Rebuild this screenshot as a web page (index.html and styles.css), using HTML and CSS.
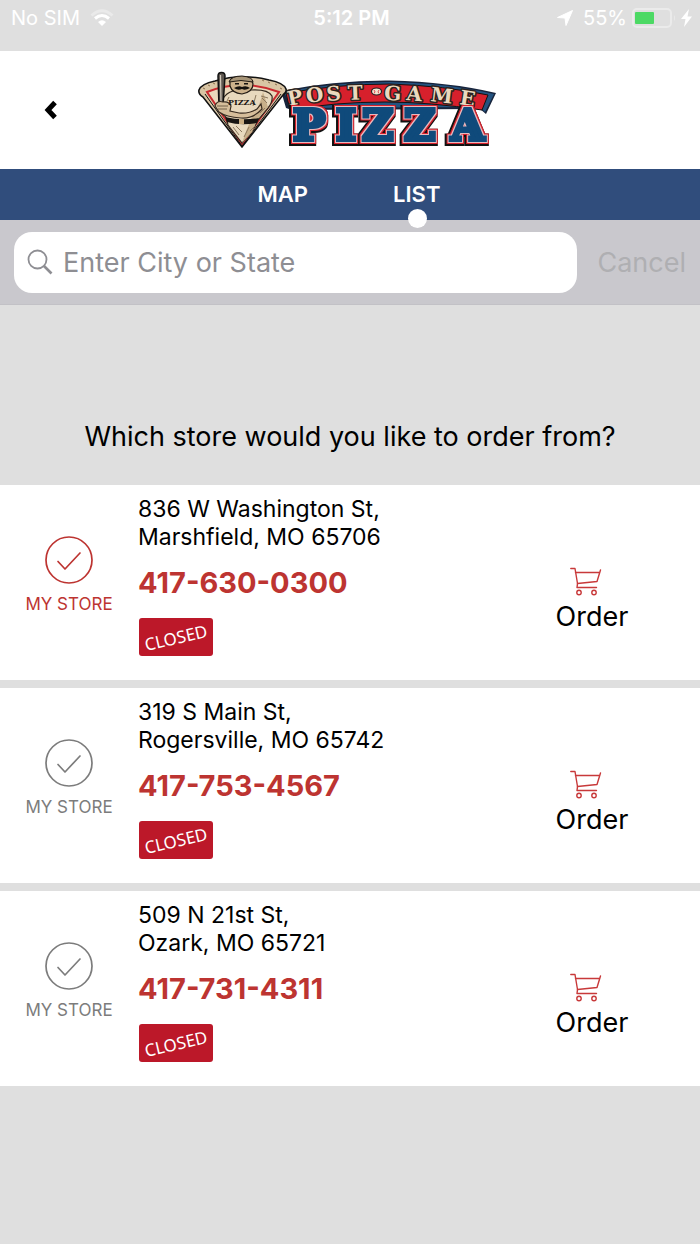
FILE: index.html
```
<!DOCTYPE html>
<html lang="en">
<head>
    <meta charset="UTF-8">
    <meta name="viewport" content="width=device-width, initial-scale=1.0">
    <title>Post-Game Pizza</title>
    <link rel="stylesheet" href="styles.css">
</head>
<body>
    <!-- shared icons -->
    <svg class="sprite" aria-hidden="true">
        <symbol id="check" viewBox="0 0 48 48">
            <g fill="none" stroke="currentColor" stroke-width="1.700" stroke-linecap="round" stroke-linejoin="round">
                <circle cx="24" cy="24" r="23"/>
                <path d="M13 25.500 L20 33 L35 17"/>
            </g>
        </symbol>
        <symbol id="cart" viewBox="0 0 44 30">
            <g fill="none" stroke="currentColor" stroke-width="1.400" stroke-linecap="round" stroke-linejoin="round">
                <path d="M.8 1.500 H5 L7.500 16.500 L7 20.500 H26.500"/>
                <path d="M5.500 5.500 H29.500 M30.500 3 L27 14.500 L7.500 16.500"/>
                <circle cx="9" cy="25.500" r="2.200"/>
                <circle cx="24" cy="25.500" r="2.200"/>
            </g>
        </symbol>
    </svg>

    <div class="status-bar">
        <div class="status-left">
            <span>No SIM</span>
            <svg width="24" height="18" viewBox="0 0 24 18">
                <g fill="none" stroke="#fff">
                    <path d="M1.500 6.500 Q12 -3 22.500 6.500" stroke-width="3" opacity=".35"/>
                    <path d="M5 9.500 Q12 3.500 19 9.500" stroke-width="3"/>
                </g>
                <path d="M12 17 L8 13 Q12 9.500 16 13 Z" fill="#fff"/>
            </svg>
        </div>
        <span class="clock">5:12 PM</span>
        <div class="status-right">
            <svg class="arrow" width="16" height="16" viewBox="0 0 16 16"><path d="M15.500 .5 L9 15.500 L8 8 L.5 7.500 Z" fill="#fff" stroke="#fff" stroke-linejoin="round"/></svg>
            <span>55%</span>
            <svg width="44" height="20" viewBox="0 0 44 20">
                <rect x="1" y="1" width="38" height="18" rx="4" fill="none" stroke="#ebebeb" stroke-width="2"/>
                <rect x="3" y="4" width="19" height="12" rx="1" fill="#4cd964"/>
                <path d="M42 7 Q44 10 42 13 Z" fill="#ebebeb"/>
            </svg>
            <svg width="11" height="18" viewBox="0 0 11 18"><path d="M8 0 L0 10 H4.500 L3 18 L11 7.500 H6.500 Z" fill="#fff"/></svg>
        </div>
    </div>

    <header class="header">
        <button class="back" aria-label="Back">
            <svg width="14" height="20" viewBox="0 0 14 20"><path d="M11 2.500 L4 10 L11 17.500" fill="none" stroke="#000" stroke-width="5"/></svg>
        </button>
        <svg class="logo" width="320" height="90" viewBox="190 65 320 90" role="img" aria-label="Post-Game Pizza">
            <!-- white, red and black edges round the big word -->
            <filter id="edges" x="-10%" y="-20%" width="120%" height="150%" color-interpolation-filters="sRGB">
                <feMorphology in="SourceAlpha" operator="dilate" radius="1" result="a"/>
                <feMorphology in="SourceAlpha" operator="dilate" radius="2" result="b"/>
                <feMorphology in="SourceAlpha" operator="dilate" radius="3" result="c"/>
                <feOffset in="c" dx="-1" dy="1" result="d"/>
                <feFlood flood-color="#e9b9bd"/>
                <feComposite in2="a" operator="in" result="white"/>
                <feFlood flood-color="#d7202c"/>
                <feComposite in2="b" operator="in" result="red"/>
                <feFlood flood-color="#111"/>
                <feComposite in2="d" operator="in" result="black"/>
                <feMerge>
                    <feMergeNode in="black"/>
                    <feMergeNode in="red"/>
                    <feMergeNode in="white"/>
                    <feMergeNode in="SourceGraphic"/>
                </feMerge>
            </filter>
            <!-- banner -->
            <path d="M281 91 Q335 80 390 80.500 Q450 82 496 93 L486 114 L480 109 L292 110 L286 108 Z" fill="#17243c"/>
            <path d="M284 92 Q336 82 390 82 Q448 83 494 94 L485 112 L480 107 L292 108 Z" fill="#235380"/>
            <path d="M286 93 Q340 84 390 84 Q446 86 488 95 L482 110 Q430 102 385 102 Q335 102 290 110 Z" fill="#d7202c" stroke="#111" stroke-width="1"/>
            <g class="logo-post">
                <text x="289 307 327 348" y="106 103 101 100" rotate="-12 -8 -5 -2">POST</text>
                <text x="384 406 430 459" y="100 100 101 104" rotate="2 5 7 9">GAME</text>
            </g>
            <ellipse cx="376.500" cy="91.500" rx="5" ry="3.500" fill="#f2e4cf" stroke="#222" stroke-width="1.200"/>
            <path d="M374 90 Q376 92 374 93.500 M379 90 Q377 92 379 93.500" fill="none" stroke="#d7202c" stroke-width=".8"/>
            <!-- word -->
            <g filter="url(#edges)">
                <text class="logo-pizza" x="293 336 362 404 451" y="140">PIZZA</text>
            </g>
            <!-- slice -->
            <path d="M199 90 Q201 84 215 81 Q241 73 269 80 Q284 83 286 89 Q287 92 283 95 L242 147 L203 97 Q198 94 199 90 Z" fill="#d9c5a4" stroke="#111" stroke-width="1.600"/>
            <path d="M207 92 Q242 78 279 92 L242 144 Z" fill="#ead9bc" stroke="#c92a30" stroke-width="2"/>
            <path d="M205 94 L242 146 L281 94" fill="none" stroke="#111" stroke-width="1"/>
            <path d="M203 88 l2 1 M208 85 l2 1 M213 83 l2 1 M262 80 l2 1 M268 82 l2 1 M275 84 l2 1 M280 88 l2 1" stroke="#8a6f4e" stroke-width="1"/>
            <!-- batter -->
            <path d="M223 99 Q226 93 233 91 L251 90 Q268 89 272 96 Q273 102 268 108 L258 120 L254 128 L242 143 L228 125 L226 117 L219 111 Z" fill="#e8d9be" stroke="#33291f" stroke-width="1.200"/>
            <path d="M263 92 L268 107 L257 120 L252 132 L242 143 L247 129 L252 117 Q260 106 263 92 Z" fill="#c8b08a"/>
            <path d="M225 117 Q241 121 259 118 L257 123 Q241 126 227 122 Z" fill="#181512"/>
            <path d="M239 119 h5 v5 h-5 Z" fill="#c9ad82"/>
            <path d="M230 82 Q229 78 238 77 Q252 76 253 84 Q253 92 242 94 Q232 93 230 86 Z" fill="#cdb28c" stroke="#221b15" stroke-width="1.200"/>
            <path d="M229 82 Q231 76 242 76 Q253 77 253 82 Q241 79 229 82 Z" fill="#a79578" stroke="#221b15" stroke-width="1"/>
            <path d="M234 88 Q239 85 242 87 Q246 85 250 88 Q245 91 242 89 Q238 91 234 88 Z M235 83 h4 v1.500 h-4 Z M244 83 h4 v1.500 h-4 Z" fill="#15110e"/>
            <path d="M218 76 Q218 72.500 221.500 72.500 Q225 72.500 225 76 L223 106 H219 Z" fill="#5e5750" stroke="#111" stroke-width="1.500"/>
            <path d="M220.500 75 L221 103" stroke="#d2c9bb" stroke-width="1.200"/>
            <path d="M215 106 Q217 100 223 102 Q229 101 231 106 L230 111 L239 113 Q249 114 257 109 L261 104 L262 109 Q253 119 241 118 Q226 117 219 112 Z" fill="#d6be9b" stroke="#392c20" stroke-width="1.200"/>
            <path d="M217 106 h11 M218 109 h9" stroke="#5c4936" stroke-width=".8"/>
            <path d="M256 95 L253 106 M229 97 L227 101 M233 127 L239 135 M249 127 L244 137 M262 98 L267 103 M236 126 L242 132 M261 96 L268 98 M255 126 L250 131 M260 113 L265 108" fill="none" stroke="#8c785f" stroke-width="1"/>
            <text class="shirt" x="228" y="105">PIZZA</text>
        </svg>
    </header>

    <nav class="tabs">
        <a href="#map">MAP</a>
        <a href="#list" class="active">LIST</a>
    </nav>

    <form class="search">
        <label class="field" for="city">
            <svg width="26" height="26" viewBox="0 0 26 26"><g fill="none" stroke="#8e8e93"><circle cx="10.500" cy="10.500" r="9" stroke-width="1.800"/><path d="M17 17 L24.500 24.500" stroke-width="2.600"/></g></svg>
            <input type="text" id="city" placeholder="Enter City or State" aria-label="Enter City or State">
        </label>
        <button type="button" class="cancel">Cancel</button>
    </form>

    <main>
        <h1 class="question">Which store would you like to order from?</h1>

        <div class="stores">
            <section class="store">
                <button class="my-store selected">
                    <svg width="48" height="48"><use href="#check"/></svg>
                    MY STORE
                </button>
                <div class="info">
                    <address>836 W Washington St,<br>Marshfield, MO 65706</address>
                    <a class="phone" href="tel:4176300300">417-630-0300</a>
                    <div class="closed"><span>CLOSED</span></div>
                </div>
                <button class="order">
                    <svg width="44" height="30"><use href="#cart"/></svg>
                    Order
                </button>
            </section>

            <section class="store">
                <button class="my-store">
                    <svg width="48" height="48"><use href="#check"/></svg>
                    MY STORE
                </button>
                <div class="info">
                    <address>319 S Main St,<br>Rogersville, MO 65742</address>
                    <a class="phone" href="tel:4177534567">417-753-4567</a>
                    <div class="closed"><span>CLOSED</span></div>
                </div>
                <button class="order">
                    <svg width="44" height="30"><use href="#cart"/></svg>
                    Order
                </button>
            </section>

            <section class="store">
                <button class="my-store">
                    <svg width="48" height="48"><use href="#check"/></svg>
                    MY STORE
                </button>
                <div class="info">
                    <address>509 N 21st St,<br>Ozark, MO 65721</address>
                    <a class="phone" href="tel:4177314311">417-731-4311</a>
                    <div class="closed"><span>CLOSED</span></div>
                </div>
                <button class="order">
                    <svg width="44" height="30"><use href="#cart"/></svg>
                    Order
                </button>
            </section>
        </div>
    </main>
</body>
</html>
```
FILE: styles.css
```
*{
    box-sizing: border-box;
}
body{
    margin: 0;
    background-color: #dfdfdf;
    color: #000;
    font-family: Inter, "Liberation Sans", sans-serif;
}
button{
    border: 0;
    padding: 0;
    background: none;
    color: inherit;
    font-family: inherit;
}
a{
    text-decoration: none;
}
svg{
    flex: none;
}
.sprite{
    display: none;
}

.status-bar{
    display: grid;
    grid-template-columns: 1fr auto 1fr;
    height: 51px;
    padding: 6px 8px 0 11px;
    color: white;
    font-size: 20px;
    line-height: 24px;
}
.status-left,
.status-right{
    display: flex;
    align-items: center;
    height: 24px;
    gap: 10px;
}
.status-right{
    justify-content: flex-end;
    gap: 5px;
}
.arrow{
    margin-right: 5px;
}
.clock{
    font-weight: 600;
}

.header{
    display: grid;
    grid-template-columns: 1fr auto 1fr;
    align-items: center;
    height: 118px;
    background-color: white;
}
.back{
    justify-self: start;
    margin-left: 34px;
    padding: 10px;
}
.back svg{
    display: block;
}
.logo{
    display: block;
}
.logo text{
    font-family: "DejaVu Serif", serif;
    font-weight: bold;
}
.logo-post text{
    font-size: 20px;
    fill: #ead9be;
    stroke: #2b2420;
    stroke-width: 3px;
    stroke-linejoin: round;
    paint-order: stroke;
}
.logo .logo-pizza{
    font-size: 43px;
    fill: #0f4a7b;
    stroke: #0f4a7b;
    stroke-width: 4px;
}
.logo .shirt{
    font-size: 8px;
    fill: #1c1815;
}

.tabs{
    display: flex;
    justify-content: center;
    gap: 85px;
    height: 51px;
    padding-right: 2px;
    background-color: #304d7c;
    font-size: 22px;
    font-weight: 600;
    line-height: 51px;
}
.tabs a{
    position: relative;
    color: white;
}
.tabs .active::after{
    content: "";
    position: absolute;
    left: 50%;
    bottom: -8px;
    width: 19px;
    height: 19px;
    margin-left: -9px;
    border-radius: 50%;
    background-color: white;
}

.search{
    display: flex;
    align-items: center;
    gap: 20px;
    height: 85px;
    padding: 0 14px;
    border-bottom: 1px solid #c2c1c6;
    background-color: #c9c8cd;
}
.field{
    display: flex;
    flex: 1;
    align-items: center;
    gap: 10px;
    height: 61px;
    padding: 0 13px;
    border-radius: 18px;
    background-color: white;
}
.field input{
    flex: 1;
    min-width: 0;
    border: 0;
    padding: 0;
    outline: none;
    background: none;
    font-family: inherit;
    font-size: 27px;
}
.field input::placeholder{
    color: #8e8e93;
}
.cancel{
    color: #afafb2;
    font-size: 27px;
}

.question{
    margin: 0;
    padding: 114px 20px 30px;
    font-size: 27px;
    font-weight: 400;
    line-height: 36px;
    text-align: center;
}

.stores{
    display: grid;
    gap: 8px;
}
.store{
    display: grid;
    grid-template-columns: 138px 1fr 216px;
    align-items: start;
    padding: 10px 0 24px;
    background-color: white;
}
.my-store,
.order{
    display: flex;
    flex-direction: column;
    align-items: center;
}
.my-store{
    gap: 10px;
    padding-top: 41px;
    color: #7c7c7c;
    font-size: 17px;
    line-height: 20px;
}
.selected{
    color: #bd3431;
}
address{
    font-size: 23px;
    font-style: normal;
    line-height: 28px;
}
.phone{
    display: block;
    margin: 14px 0 17px;
    color: #bd3431;
    font-size: 29px;
    font-weight: 700;
    line-height: 36px;
}
.closed{
    display: flex;
    align-items: center;
    justify-content: center;
    width: 74px;
    height: 38px;
    margin-left: 1px;
    border-radius: 3px;
    background-color: #bc1829;
    color: white;
    font-family: "Noto Sans", sans-serif;
    font-size: 17px;
}
.closed span{
    transform: rotate(-13deg);
}
.order{
    gap: 4px;
    padding-top: 72px;
    font-size: 27px;
    line-height: 32px;
}
.order svg{
    color: #c8393a;
}
```
